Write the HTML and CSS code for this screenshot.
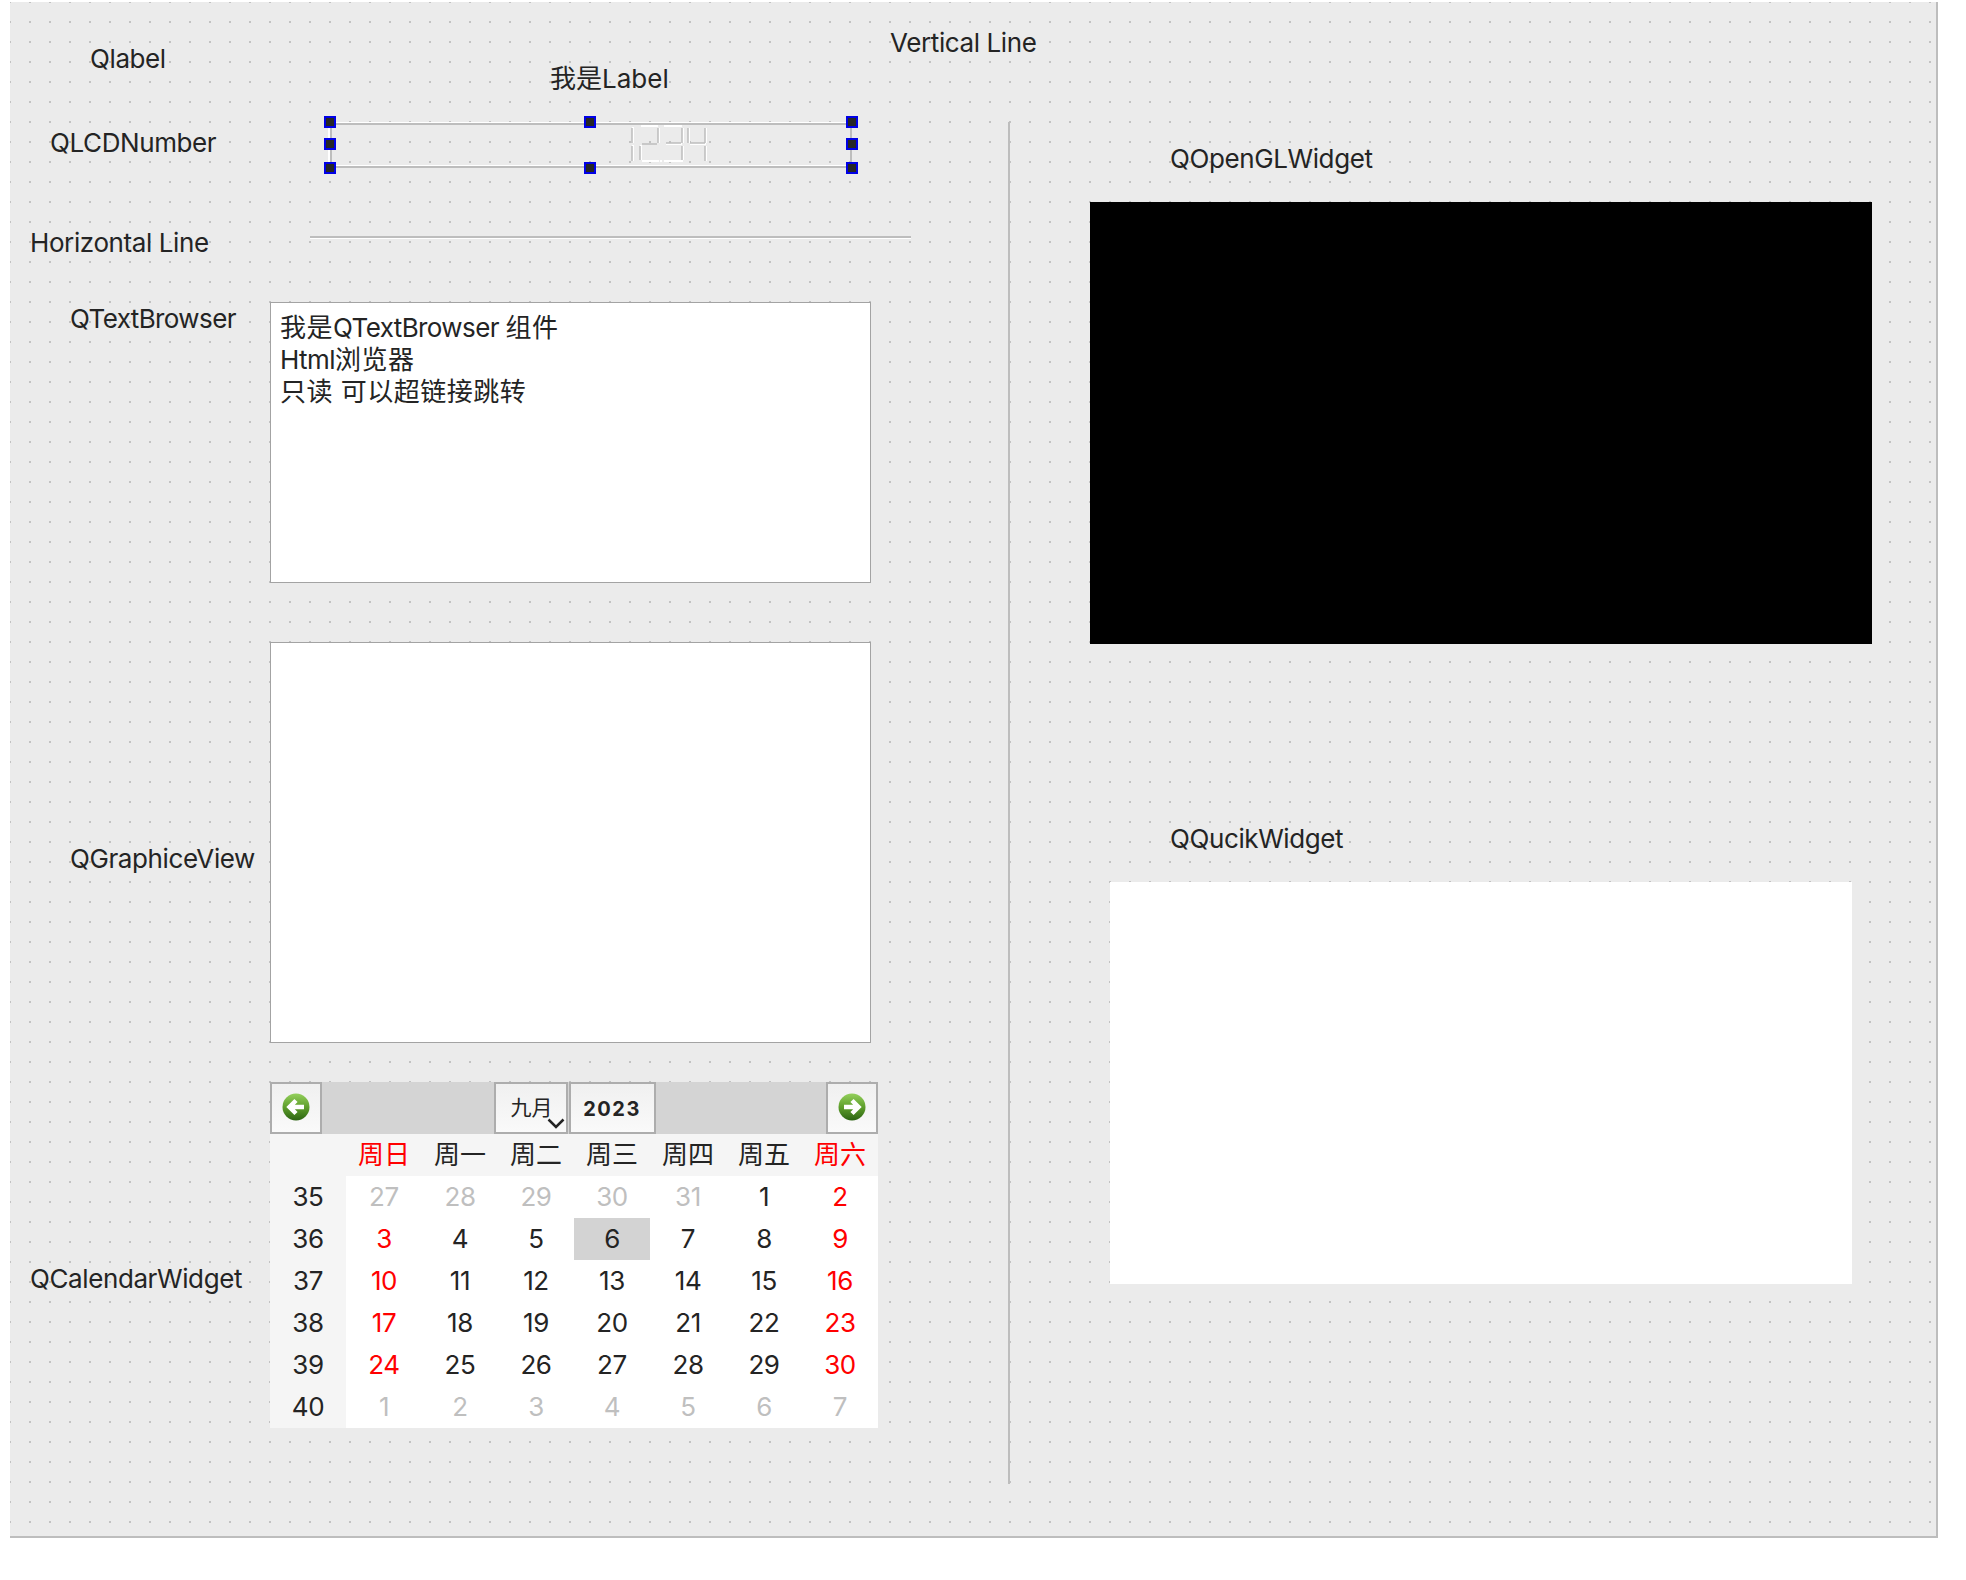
FILE: index.html
```html
<!DOCTYPE html>
<html lang="en">
<head>
    <meta charset="UTF-8">
    <meta name="viewport" content="width=device-width, initial-scale=1.0">
    <title>Form</title>
    <link rel="stylesheet" href="styles.css">
</head>
<body>
    <div class="form">
        <span class="lbl lbl-qlabel">Qlabel</span>
        <span class="lbl lbl-me">我是Label</span>
        <span class="lbl lbl-vline">Vertical Line</span>
        <span class="lbl lbl-lcd">QLCDNumber</span>
        <span class="lbl lbl-hline">Horizontal Line</span>
        <span class="lbl lbl-browser">QTextBrowser</span>
        <span class="lbl lbl-graphics">QGraphiceView</span>
        <span class="lbl lbl-calendar">QCalendarWidget</span>
        <span class="lbl lbl-opengl">QOpenGLWidget</span>
        <span class="lbl lbl-quick">QQucikWidget</span>

        <!-- LCD with selection handles -->
        <div class="lcd">
            <svg class="lcd-digits" width="80" height="40" viewBox="0 0 80 40">
                <g class="seg-light">
                    <path d="M3 3v16M3 21v16M11 2h17M29 4v15M11 21v15M12 37h17M34 2h18M53 4v15M36 20h16M53 22v14M34 37h19M59 4v15M60 20h16M76 4v15M76 22v15M30 37h2"/>
                </g>
                <g class="seg-dark">
                    <path d="M2 4v15M2 22v15M10 22v14M28 4v15M52 4v15M52 22v14M58 4v15M75 4v15M75 22v15M12 20h15M36 19h15M60 19h15"/>
                </g>
            </svg>
            <i class="handle h-tl"></i><i class="handle h-tm"></i><i class="handle h-tr"></i>
            <i class="handle h-ml"></i><i class="handle h-mr"></i>
            <i class="handle h-bl"></i><i class="handle h-bm"></i><i class="handle h-br"></i>
        </div>

        <div class="hline"></div>
        <div class="vline"></div>

        <div class="browser"><span class="cjk">我是</span>QTextBrowser <span class="cjk">组件</span><br>Html<span class="cjk">浏览器</span><br><span class="cjk">只读 可以超链接跳转</span></div>
        <div class="graphics"></div>
        <div class="opengl"></div>
        <div class="quick"></div>

        <div class="calendar">
            <div class="cal-nav">
                <button class="nav-btn">
                    <svg width="28" height="28" viewBox="0 0 28 28">
                        <defs>
                            <linearGradient id="ballLeft" x1="0" y1="0" x2="0" y2="1">
                                <stop offset="0" stop-color="#94d05c"/>
                                <stop offset="0.5" stop-color="#5f9f2c"/>
                                <stop offset="1" stop-color="#2c6412"/>
                            </linearGradient>
                        </defs>
                        <circle cx="14" cy="14" r="13.500" fill="url(#ballLeft)"/>
                        <path class="ball-arrow" d="M22 14H8M14 7.500L7.500 14l6.500 6.500"/>
                    </svg>
                </button>
                <div class="nav-space"></div>
                <button class="month-btn">九月<svg class="chev" width="18" height="12" viewBox="0 0 18 12"><path d="M1.500 1.500l7.500 7.500 7.500-7.500"/></svg></button>
                <button class="year-btn">2023</button>
                <div class="nav-space"></div>
                <button class="nav-btn">
                    <svg width="28" height="28" viewBox="0 0 28 28">
                        <defs>
                            <linearGradient id="ballRight" x1="0" y1="0" x2="0" y2="1">
                                <stop offset="0" stop-color="#94d05c"/>
                                <stop offset="0.5" stop-color="#5f9f2c"/>
                                <stop offset="1" stop-color="#2c6412"/>
                            </linearGradient>
                        </defs>
                        <circle cx="14" cy="14" r="13.500" fill="url(#ballRight)"/>
                        <path class="ball-arrow" d="M6 14h14M14 7.500l6.500 6.500-6.500 6.500"/>
                    </svg>
                </button>
            </div>
            <div class="cal-grid">
                <div class="head"></div>
                <div class="head red">周日</div><div class="head">周一</div><div class="head">周二</div><div class="head">周三</div><div class="head">周四</div><div class="head">周五</div><div class="head red">周六</div>

                <div class="week">35</div>
                <div class="day off">27</div><div class="day off">28</div><div class="day off">29</div><div class="day off">30</div><div class="day off">31</div><div class="day">1</div><div class="day red">2</div>

                <div class="week">36</div>
                <div class="day red">3</div><div class="day">4</div><div class="day">5</div><div class="day today">6</div><div class="day">7</div><div class="day">8</div><div class="day red">9</div>

                <div class="week">37</div>
                <div class="day red">10</div><div class="day">11</div><div class="day">12</div><div class="day">13</div><div class="day">14</div><div class="day">15</div><div class="day red">16</div>

                <div class="week">38</div>
                <div class="day red">17</div><div class="day">18</div><div class="day">19</div><div class="day">20</div><div class="day">21</div><div class="day">22</div><div class="day red">23</div>

                <div class="week">39</div>
                <div class="day red">24</div><div class="day">25</div><div class="day">26</div><div class="day">27</div><div class="day">28</div><div class="day">29</div><div class="day red">30</div>

                <div class="week">40</div>
                <div class="day off">1</div><div class="day off">2</div><div class="day off">3</div><div class="day off">4</div><div class="day off">5</div><div class="day off">6</div><div class="day off">7</div>
            </div>
        </div>
    </div>
</body>
</html>
```

FILE: styles.css
```css
html, body {
    margin: 0;
    padding: 0;
    background-color: #fff;
}

body {
    font-family: Inter, "Noto Sans CJK SC", sans-serif;
    font-size: 26px;
    letter-spacing: -0.4px;
    color: #242424;
}

/* Designer form canvas, widgets sit at their own geometry */
.form {
    position: relative;
    width: 1926px;
    height: 1534px;
    margin: 2px 0 0 10px;
    background-color: #ebebeb;
    background-image: radial-gradient(circle at 1px 1px, #c2c2c2 1.500px, transparent 1.500px);
    background-size: 20px 20px;
    background-position: -1px -1px;
    border-right: 2px solid #bdbdbd;
    border-bottom: 2px solid #bdbdbd;
}

.lbl {
    position: absolute;
    line-height: 32px;
    white-space: nowrap;
}

.lbl-qlabel { left: 80px; top: 41px; }
.lbl-me { left: 540px; top: 61px; letter-spacing: 0; }
.lbl-vline { left: 880px; top: 25px; }
.lbl-lcd { left: 40px; top: 125px; }
.lbl-hline { left: 20px; top: 225px; }
.lbl-browser { left: 60px; top: 301px; letter-spacing: -0.6px; }
.lbl-graphics { left: 60px; top: 841px; }
.lbl-calendar { left: 20px; top: 1261px; }
.lbl-opengl { left: 1160px; top: 141px; }
.lbl-quick { left: 1160px; top: 821px; }

.lcd {
    position: absolute;
    left: 320px;
    top: 121px;
    width: 522px;
    height: 45px;
    box-sizing: border-box;
    border: 2px solid #bdbdbd;
    box-shadow: 0 -1px 0 #fff, inset 0 -1px 0 #fff, -2px 0 0 #fff;
}

.lcd-digits {
    position: absolute;
    left: 298px;
    top: -1px;
}

.seg-light path {
    fill: none;
    stroke: #fff;
    stroke-width: 2;
}

.seg-dark path {
    fill: none;
    stroke: #bdbdbd;
    stroke-width: 1.500;
}

.handle {
    position: absolute;
    width: 12px;
    height: 12px;
    background-color: #262626;
    border: 2px solid #0000e6;
    box-sizing: border-box;
}

.h-tl { left: -8px; top: -9px; }
.h-tm { left: 252px; top: -9px; }
.h-tr { left: 514px; top: -9px; }
.h-ml { left: -8px; top: 13px; }
.h-mr { left: 514px; top: 13px; }
.h-bl { left: -8px; top: 37px; }
.h-bm { left: 252px; top: 37px; }
.h-br { left: 514px; top: 37px; }

.hline {
    position: absolute;
    left: 300px;
    top: 234px;
    width: 601px;
    height: 2px;
    background-color: #bdbdbd;
    box-shadow: 0 1px 0 #fff;
}

.vline {
    position: absolute;
    left: 998px;
    top: 120px;
    width: 2px;
    height: 1362px;
    background-color: #bdbdbd;
}

.browser, .graphics {
    position: absolute;
    left: 260px;
    width: 601px;
    box-sizing: border-box;
    background-color: #fff;
    border: 1px solid #a3a3a3;
}

.browser {
    top: 300px;
    height: 281px;
    padding: 9px 9px;
    line-height: 32px;
    letter-spacing: -0.6px;
}

.cjk {
    letter-spacing: 0.5px;
}

.graphics {
    top: 640px;
    height: 401px;
}

.opengl {
    position: absolute;
    left: 1080px;
    top: 200px;
    width: 782px;
    height: 442px;
    background-color: #000;
}

.quick {
    position: absolute;
    left: 1100px;
    top: 880px;
    width: 742px;
    height: 402px;
    background-color: #fff;
}

/* Calendar */
.calendar {
    position: absolute;
    left: 260px;
    top: 1080px;
    width: 608px;
}

.cal-nav {
    display: flex;
    height: 52px;
    background-color: #d4d4d4;
}

.nav-space {
    flex: 1;
}

.nav-btn, .month-btn, .year-btn {
    box-sizing: border-box;
    height: 52px;
    padding: 0;
    border: 2px solid #adadad;
    background: linear-gradient(#f0f0f0, #fafafa);
    font-family: inherit;
    color: #242424;
}

.nav-btn {
    display: flex;
    align-items: center;
    justify-content: center;
    width: 52px;
    padding-bottom: 2px;
}

.ball-arrow {
    fill: none;
    stroke: #fff;
    stroke-width: 4.500;
}

.month-btn {
    position: relative;
    width: 74px;
    margin-left: 1px;
    font-size: 21px;
    text-align: left;
    padding: 0 0 4px 15px;
}

.chev {
    position: absolute;
    right: 1px;
    bottom: 2px;
}

.chev path {
    fill: none;
    stroke: #242424;
    stroke-width: 2.500;
}

.year-btn {
    width: 87px;
    margin-left: 1px;
    font-size: 20px;
    font-weight: bold;
    letter-spacing: 1.500px;
    padding-top: 2px;
}

.cal-grid {
    display: grid;
    grid-template-columns: repeat(8, 76px);
    grid-template-rows: 42px repeat(6, 42px);
    background-color: #fff;
}

.head, .week, .day {
    display: flex;
    align-items: center;
    justify-content: center;
    box-sizing: border-box;
}

.head {
    padding-bottom: 6px;
    letter-spacing: 0;
}

.week, .day {
    padding-bottom: 2px;
}

.head, .week {
    background-color: #f5f5f5;
}

.red { color: #f00; }
.off { color: #bfbfbf; }
.today { background-color: #d3d3d3; }
```
